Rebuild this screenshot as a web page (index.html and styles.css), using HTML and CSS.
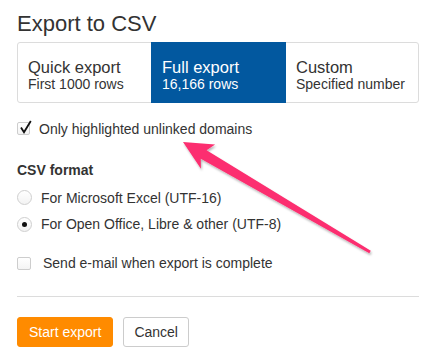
FILE: index.html
```html
<!DOCTYPE html>
<html lang="en">
<head>
<meta charset="utf-8">
<title>Export to CSV</title>
<link rel="stylesheet" href="styles.css">
</head>
<body>
<div class="page">
  <div class="dialog">
    <h1 class="title">Export to CSV</h1>
    <div class="tabs">
      <div class="tab">
        <div class="tab-title">Quick export</div>
        <div class="tab-sub">First 1000 rows</div>
      </div>
      <div class="tab active">
        <div class="tab-title">Full export</div>
        <div class="tab-sub">16,166 rows</div>
      </div>
      <div class="tab">
        <div class="tab-title">Custom</div>
        <div class="tab-sub">Specified number</div>
      </div>
    </div>

    <label class="row check-row highlight">
      <span class="box checked"><svg class="tick" viewBox="0 0 16 16" width="16" height="16"><polyline points="4,7.6 7,12.3 13.8,1" fill="none" stroke="#111" stroke-width="1.8" stroke-linejoin="miter"/></svg></span>
      <span class="label">Only highlighted unlinked domains</span>
    </label>

    <div class="row section-title">CSV format</div>

    <label class="row radio-row first-radio">
      <span class="radio"></span>
      <span class="label">For Microsoft Excel (UTF-16)</span>
    </label>
    <label class="row radio-row second-radio">
      <span class="radio on"></span>
      <span class="label">For Open Office, Libre &amp; other (UTF-8)</span>
    </label>

    <label class="row check-row email">
      <span class="box"></span>
      <span class="label">Send e-mail when export is complete</span>
    </label>

    <hr class="divider">

    <div class="actions">
      <button class="btn primary" type="button">Start export</button>
      <button class="btn" type="button">Cancel</button>
    </div>
  </div>

  <svg class="annotation" width="430" height="361" viewBox="0 0 430 361">
    <defs>
      <filter id="shadow" x="-10%" y="-10%" width="130%" height="130%">
        <feDropShadow dx="1" dy="2" stdDeviation="0.8" flood-color="#000" flood-opacity="0.28"/>
      </filter>
    </defs>
    <polygon filter="url(#shadow)" fill="#fc2f6f"
      points="183,142 215.1,144.6 206.6,150.2 370.8,250.7 369.3,253.3 200.8,158.8 200.9,168.8"/>
  </svg>
</div>
</body>
</html>
```

FILE: styles.css
```css
* {
  box-sizing: border-box;
}

html, body {
  margin: 0;
  padding: 0;
  background: #ffffff;
}

body {
  font-family: "Liberation Sans", Arial, Helvetica, sans-serif;
  color: #333333;
  font-size: 14px;
}

.page {
  position: relative;
  width: 430px;
  height: 361px;
  overflow: hidden;
}

.dialog {
  padding: 0 11px 0 17px;
}

.title {
  margin: 11px 0 5px;
  font-size: 22px;
  line-height: 26px;
  font-weight: normal;
  color: #333333;
}

.tabs {
  display: grid;
  grid-template-columns: 133px 135px 1fr;
  border: 1px solid #dcdcdc;
  border-radius: 3px;
}

.tab {
  padding: 14.5px 10px 10.5px;
  color: #333333;
  white-space: nowrap;
}

.tab.active {
  background: #02589f;
  color: #ffffff;
  margin: -1px 0;
  padding: 15.5px 11px 11.5px;
}

.tab-title {
  font-size: 16.5px;
  line-height: 18px;
}

.tab-sub {
  font-size: 14px;
  line-height: 16px;
}

.row {
  display: flex;
  align-items: center;
  height: 20px;
  line-height: 20px;
  font-size: 14px;
  white-space: nowrap;
}

.highlight {
  margin-top: 15.5px;
}

.highlight .label {
  margin-left: 9px;
}

.section-title {
  margin-top: 21px;
  font-weight: bold;
}

.first-radio {
  margin-top: 8px;
}

.second-radio {
  margin-top: 6.5px;
}

.radio-row .label {
  margin-left: 9px;
}

.email {
  margin-top: 19px;
}

.email .label {
  margin-left: 12px;
}

.box {
  position: relative;
  flex: none;
  width: 13px;
  height: 13px;
  border: 1px solid #cdcdcd;
  border-radius: 2px;
  background: linear-gradient(#ffffff, #f4f4f4);
}

.email .box {
  width: 14px;
}

.tick {
  position: absolute;
  left: -1px;
  top: -3px;
}

.radio {
  position: relative;
  flex: none;
  width: 15px;
  height: 15px;
  border: 1px solid #cfcfcf;
  border-radius: 50%;
  background: linear-gradient(#ffffff, #f3f3f3);
}

.radio.on::after {
  content: "";
  position: absolute;
  left: 4px;
  top: 4px;
  width: 5px;
  height: 5px;
  border-radius: 50%;
  background: #111111;
}

.divider {
  margin: 23px 0 0;
  border: 0;
  border-top: 1px solid #dcdcdc;
  height: 0;
}

.actions {
  display: flex;
  gap: 10px;
  margin-top: 20px;
}

.btn {
  height: 30px;
  padding: 0 10px;
  border: 1px solid #cccccc;
  border-radius: 3px;
  background: #ffffff;
  color: #333333;
  font-family: "Liberation Sans", Arial, Helvetica, sans-serif;
  font-size: 14px;
  line-height: 28px;
  white-space: nowrap;
}

.btn.primary {
  padding: 0 11px;
  border-color: #ff8b00;
  background: #ff8b00;
  color: #ffffff;
}

.annotation {
  position: absolute;
  left: 0;
  top: 0;
  pointer-events: none;
}
```
